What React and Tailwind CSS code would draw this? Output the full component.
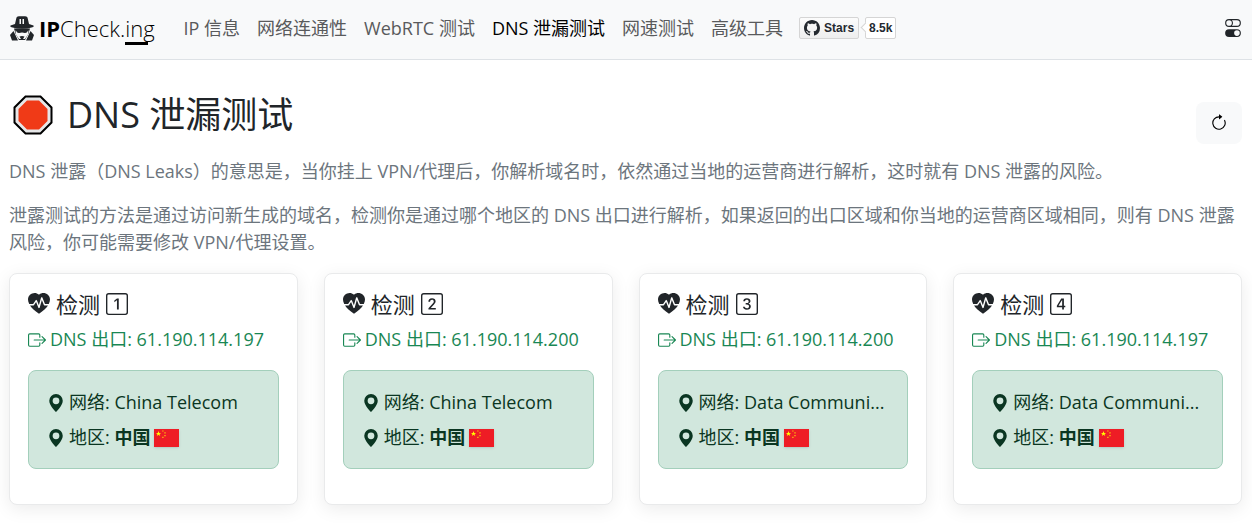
import React from 'react'
import {
  Bs1Square,
  Bs2Square,
  Bs3Square,
  Bs4Square,
  BsArrowClockwise,
  BsBoxArrowRight,
  BsGeoAltFill,
  BsGithub,
  BsHeartPulseFill,
  BsToggles
} from 'react-icons/bs'

const navItems = [
  { id: 'ipinfo', title: 'IP 信息' },
  { id: 'connectivity', title: '网络连通性' },
  { id: 'webrtc', title: 'WebRTC 测试' },
  { id: 'dnsleak', title: 'DNS 泄漏测试', active: true },
  { id: 'speedtest', title: '网速测试' },
  { id: 'tools', title: '高级工具' }
]

const leakTests = [
  { id: 1, Icon: Bs1Square, ip: '61.190.114.197', org: 'China Telecom', country: '中国' },
  { id: 2, Icon: Bs2Square, ip: '61.190.114.200', org: 'China Telecom', country: '中国' },
  { id: 3, Icon: Bs3Square, ip: '61.190.114.200', org: 'Data Communi...', country: '中国' },
  { id: 4, Icon: Bs4Square, ip: '61.190.114.197', org: 'Data Communi...', country: '中国' }
]

export default function App() {
  return (
    <div className="min-h-screen bg-white font-['Open_Sans','Noto_Sans_CJK_SC',sans-serif] text-lg leading-[27px] text-[#212529]">
      <Navbar />
      <main className="pl-[9px] pr-[10px] pt-[26px]">
        <div className="flex items-center justify-between">
          <h1 className="flex items-center gap-[14px] text-4xl leading-[54px]">
            <StopSign />
            DNS 泄漏测试
          </h1>
          <button type="button" aria-label="刷新" className="mt-4 flex h-[42px] w-[46px] items-center justify-center rounded-lg bg-[#f8f9fa] text-black">
            <BsArrowClockwise className="size-[18px]" />
          </button>
        </div>
        <div className="mt-[14px] space-y-[17px] text-[#6c757d]">
          <p>DNS 泄露（DNS Leaks）的意思是，当你挂上 VPN/代理后，你解析域名时，依然通过当地的运营商进行解析，这时就有 DNS 泄露的风险。</p>
          <p>泄露测试的方法是通过访问新生成的域名，检测你是通过哪个地区的 DNS 出口进行解析，如果返回的出口区域和你当地的运营商区域相同，则有 DNS 泄露风险，你可能需要修改 VPN/代理设置。</p>
        </div>
        <section className="mt-[17px] grid grid-cols-4 gap-[26px]">
          {leakTests.map((test) => (
            <LeakCard key={test.id} test={test} />
          ))}
        </section>
      </main>
    </div>
  )
}

function Navbar() {
  return (
    <header className="flex h-[60px] items-center border-b border-[#dee2e6] bg-[#f8f9fa] pl-[9px] pr-[10px] pb-[3px]">
      <a href="#top" className="flex items-center gap-1 text-[22px] text-black">
        <Detective />
        <span className="font-light">
          <b className="font-bold">IP</b>Check.
          <span className="relative">
            ing
            <span className="absolute -bottom-[2px] left-0 h-[3px] w-[23px] bg-black" />
          </span>
        </span>
      </a>
      <nav className="ml-[29px] flex gap-[17px]">
        {navItems.map((item) => (
          <a key={item.id} href={`#${item.id}`} className={item.active ? 'text-black' : 'text-[#595a5c]'}>
            {item.title}
          </a>
        ))}
      </nav>
      <a href="#github" className="ml-4 flex items-center gap-[6px] font-['Liberation_Sans',sans-serif] text-xs font-bold leading-5 text-[#24292f]">
        <span className="flex h-[22px] items-center gap-1 rounded-xs border border-[#d5d5d5] bg-linear-to-b from-[#fcfcfc] to-[#eeeeee] px-1">
          <BsGithub className="size-4" />
          Stars
        </span>
        <span className="relative h-[22px] rounded-xs border border-[#d5d5d5] bg-white px-[3px]">
          <span className="absolute -left-[4px] top-[6px] size-[7px] rotate-45 border-b border-l border-[#d5d5d5] bg-white" />
          8.5k
        </span>
      </a>
      <button type="button" aria-label="设置" className="ml-auto">
        <BsToggles className="size-[18px]" />
      </button>
    </header>
  )
}

function LeakCard({ test }) {
  const { Icon } = test
  return (
    <article className="min-w-0 rounded-lg border border-[#e9eaeb] bg-white px-[18px] pb-[35px] pt-4 shadow-[0_4px_18px_rgba(0,0,0,0.08)]">
      <h2 className="flex items-center gap-[6px] text-[22px] leading-7">
        <BsHeartPulseFill className="size-[22px]" />
        检测
        <Icon className="size-[22px]" />
      </h2>
      <p className="mt-2 flex items-center gap-1 text-[#198754]">
        <BsBoxArrowRight className="size-[18px]" />
        DNS 出口: {test.ip}
      </p>
      <div className="mt-[17px] space-y-2 rounded-lg border border-[#a3cfbb] bg-[#d1e7dd] px-[18px] pb-[17px] pt-[18px] text-[#0a3622]">
        <p className="flex items-center gap-1 whitespace-nowrap">
          <BsGeoAltFill className="size-[18px] shrink-0" />
          <span>网络: {test.org}</span>
        </p>
        <p className="flex items-center gap-1">
          <BsGeoAltFill className="size-[18px] shrink-0" />
          <span>
            地区: <b>{test.country}</b>
          </span>
          <ChinaFlag />
        </p>
      </div>
    </article>
  )
}

function Detective() {
  return (
    <svg viewBox="0 0 26 26" className="size-[26px]" fill="#212529">
      <path d="M6 9 7.500 2.500Q8.500 1 10.500 1.200h5Q17.500 1 18.500 2.500L20 9l4.500 1.500q1 1.200-1 1.700-10 3-21 0-2-.5-1-1.700z" />
      <path d="M10.500 4H12v5h-1.500zM13.500 4H15v5h-1.500z" fill="#f8f9fa" />
      <path d="M5 13.500h16l-1.500 5L16 25h-6l-3.500-6.500z" />
      <path d="m4.500 16-3.500 4 2 5.500h6zM21.500 16l3.500 4-2 5.500h-6z" />
      <path d="M6.500 15.500 12 17l1 1 1-1 5.500-1.500-.5 4-3 4.500h-6L7 19.500z" fill="#f8f9fa" />
      <path d="M7 15h5l1 .8 1-.8h5q-.5 3-3 3-2 0-3-1.500Q12 18 10 18q-2.500 0-3-3zM10.500 21.500q2.500-1.200 5 0L14 24h-2z" />
    </svg>
  )
}

function StopSign() {
  return (
    <svg viewBox="0 0 40 40" className="ml-1 size-10">
      <path d="M12.500 1.500h15l11 11v15l-11 11h-15l-11-11v-15z" fill="#e6e7e8" stroke="#000" strokeWidth="2" />
      <path d="M14 5.500h12l8.500 8.500v12L26 34.500H14L5.500 26V14z" fill="#f03a17" />
    </svg>
  )
}

function ChinaFlag() {
  return (
    <svg viewBox="0 0 25 18" className="h-[18px] w-[25px] shadow-sm">
      <path d="M0 0h25v18H0z" fill="#ee1c25" />
      <path d="m4.500 2 .7 1.900h2L5.600 5.100l.6 1.900-1.700-1.200L2.800 7l.6-1.900-1.600-1.200h2z" fill="#ff0" />
      <path d="M8.300 1.400h1.200v1.200H8.300zM10.400 3.300h1.200v1.200h-1.200zM10.400 6h1.200v1.200h-1.200zM8.300 7.800h1.200V9H8.300z" fill="#ff0" opacity=".8" />
    </svg>
  )
}
